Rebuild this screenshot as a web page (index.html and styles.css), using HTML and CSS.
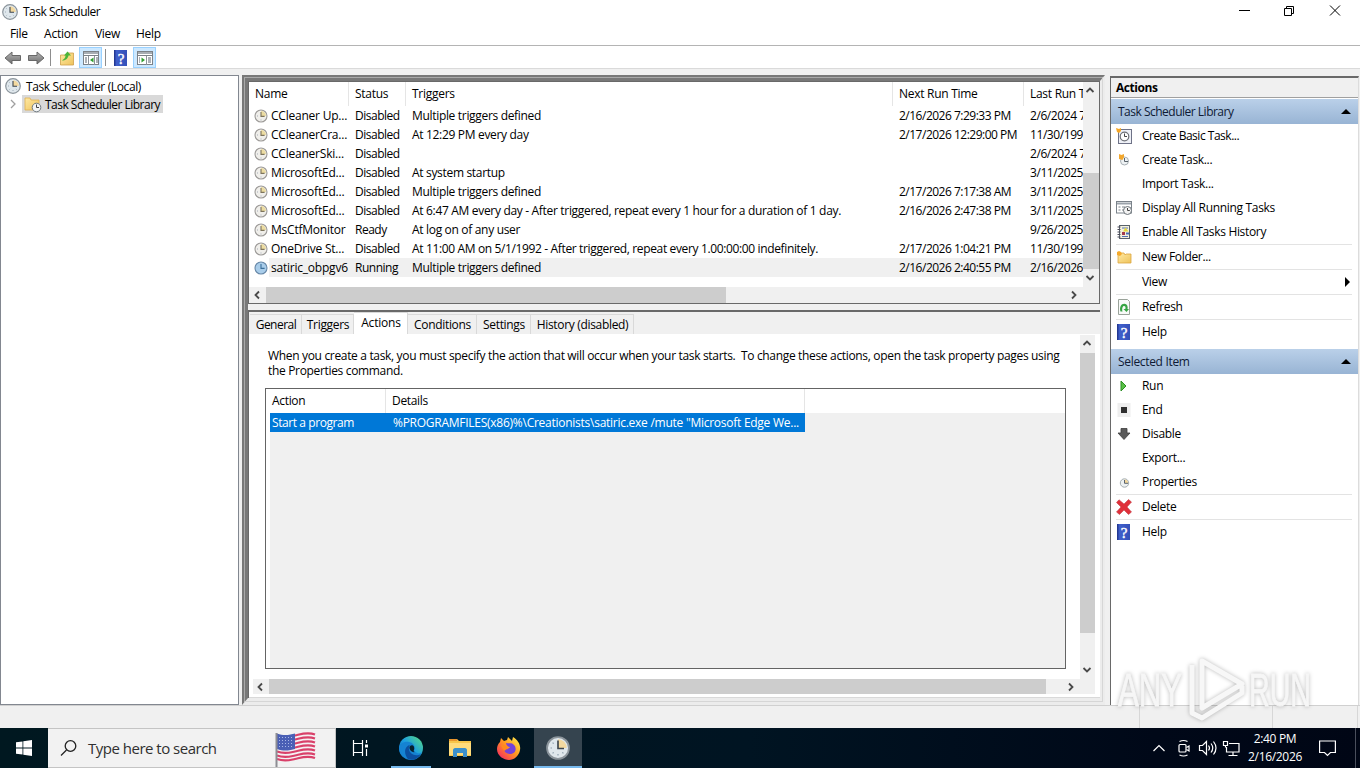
FILE: index.html
```html
<!DOCTYPE html>
<html lang="en">
<head>
    <meta charset="UTF-8">
    <meta name="viewport" content="width=device-width, initial-scale=1.0">
    <title>Task Scheduler</title>
    <link rel="stylesheet" href="styles.css">
</head>
<body>
    <!-- Shared icons -->
    <svg class="sprite" width="0" height="0">
        <defs>
            <linearGradient id="folderFill" x1="0" y1="0" x2="1" y2="1">
                <stop offset="0" stop-color="#ffe9a3"/><stop offset="1" stop-color="#eec35c"/>
            </linearGradient>
            <linearGradient id="arrowFill" x1="0" y1="0" x2="0" y2="1">
                <stop offset="0" stop-color="#b5b5b5"/><stop offset="1" stop-color="#6d6d6d"/>
            </linearGradient>
            <linearGradient id="helpFill" x1="0" y1="0" x2="1" y2="0">
                <stop offset="0" stop-color="#1d2f86"/><stop offset=".2" stop-color="#3f5fcb"/><stop offset="1" stop-color="#3450b8"/>
            </linearGradient>
            <linearGradient id="edgeFill" x1="0" y1="1" x2="1" y2="0">
                <stop offset="0" stop-color="#0c59a4"/><stop offset=".5" stop-color="#1b9de2"/><stop offset="1" stop-color="#5be07c"/>
            </linearGradient>
            <linearGradient id="foxFill" x1="1" y1="0" x2="0" y2="1">
                <stop offset="0" stop-color="#fff44f"/><stop offset=".45" stop-color="#ff9a1f"/><stop offset="1" stop-color="#f5156c"/>
            </linearGradient>
        </defs>
        <symbol id="clock" viewBox="0 0 16 16">
            <circle cx="8" cy="8" r="7.3" fill="#dfe7ec" stroke="#8b949b" stroke-width="1.2"/>
            <path d="M8 8V2.2A5.8 5.8 0 0 1 13.8 8z" fill="#f3d9a0"/>
            <path d="M8 3v5.300h4" fill="none" stroke="#3d464d" stroke-width="1.1"/>
            <path d="M3 8h1M8 12v1M4.400 4.400l.7.7M4.400 11.600l.7-.7M11.600 11.600l-.7-.7" stroke="#8fa0ad" stroke-width=".8"/>
        </symbol>
        <symbol id="clock-task" viewBox="0 0 14 14">
            <circle cx="7" cy="7" r="6" fill="#f0efeb" stroke="#9c9a98" stroke-width="1.1"/>
            <path d="M7 7V2a5 5 0 0 1 5 5z" fill="#ecdca2"/>
            <path d="M7 3v4.400h3.600" fill="none" stroke="#7d745c" stroke-width="1.1"/>
            <path d="M3 7h1M7 10.500v1" stroke="#a5abb8"/>
        </symbol>
        <symbol id="clock-run" viewBox="0 0 14 14">
            <circle cx="7" cy="7" r="6" fill="#a9cdea" stroke="#6788a8" stroke-width="1.1"/>
            <path d="M7 3v4.400h3.600" fill="none" stroke="#3b6f9a" stroke-width="1.1"/>
        </symbol>
        <symbol id="help" viewBox="0 0 13 16">
            <rect width="13" height="16" fill="url(#helpFill)"/>
            <text x="7" y="13.500" text-anchor="middle" class="help-mark">?</text>
        </symbol>
        <symbol id="window" viewBox="0 0 16 14">
            <rect x=".5" y=".5" width="15" height="13" fill="#fff" stroke="#7b8187"/>
            <path d="M1 2h14" stroke="#a7adb3" stroke-width="2"/>
            <path d="M1 4.500h14" stroke="#7b8187"/>
        </symbol>
        <symbol id="chev-left" viewBox="0 0 16 16"><path d="M10 4.500L6.500 8l3.500 3.500" class="chev"/></symbol>
        <symbol id="chev-right" viewBox="0 0 16 16"><path d="M6 4.500L9.500 8 6 11.500" class="chev"/></symbol>
        <symbol id="chev-up" viewBox="0 0 16 16"><path d="M4.500 10L8 6.500l3.500 3.500" class="chev"/></symbol>
        <symbol id="chev-down" viewBox="0 0 16 16"><path d="M4.500 6L8 9.500 11.500 6" class="chev"/></symbol>
    </svg>

    <div class="window">
        <header class="titlebar">
            <svg class="app-icon"><use href="#clock"/></svg>
            <span class="title">Task Scheduler</span>
            <svg class="caption-buttons" width="110" height="20" viewBox="0 0 110 20">
                <g fill="none" stroke="#000">
                    <path d="M4 10.500h11M49.500 8.500h7v7h-7zM51.500 8V6.500h7v7H57M95 5.500l10 10M105 5.500l-10 10"/>
                </g>
            </svg>
        </header>
        <nav class="menubar">
            <span class="m-file">File</span>
            <span class="m-action">Action</span>
            <span class="m-view">View</span>
            <span>Help</span>
        </nav>
        <div class="toolbar">
            <svg width="18" height="16" viewBox="0 0 18 16"><path d="M1 8l7-6v3.500h8.500v5H8V14z" fill="url(#arrowFill)" stroke="#686868"/></svg>
            <svg class="t-forward" width="18" height="16" viewBox="0 0 18 16"><path d="M17 8l-7-6v3.500H1.500v5H10V14z" fill="url(#arrowFill)" stroke="#686868"/></svg>
            <i class="tool-sep"></i>
            <svg class="t-up" width="16" height="16" viewBox="0 0 16 16">
                <path d="M1.500 5h6l1-2h6v12h-13z" fill="url(#folderFill)" stroke="#cfa04a" stroke-width=".8"/>
                <path d="M3 10.500c2.500-1.500 3.500-3 3.500-5H5L8.500 1.500 12 5.500H9.500c-.5 3-3 5-6.500 5z" fill="#4bb53a"/>
            </svg>
            <span class="tool-on">
                <svg width="16" height="14" viewBox="0 0 16 14"><use href="#window"/><path d="M5.500 5v9M11.500 5v9" stroke="#8d9399"/><path d="M2 7h2M2 9h2M2 11h2M13 7h2M13 9h2M13 11h2" stroke="#5a6570"/><path d="M10.500 6.500v5L7 9z" fill="#2f9e2f"/></svg>
            </span>
            <i class="tool-sep near"></i>
            <svg class="t-help" width="13" height="16"><use href="#help"/></svg>
            <span class="tool-on">
                <svg width="16" height="14" viewBox="0 0 16 14"><use href="#window"/><path d="M9.500 5v9" stroke="#8d9399"/><path d="M2 7h1M2 9h1M2 11h1M11 7h3M11 9h3M11 11h3" stroke="#5a6570"/><path d="M4.500 6.500v5L8 9z" fill="#2f9e2f"/></svg>
            </span>
        </div>

        <main class="content">
            <aside class="tree">
                <div class="tree-row">
                    <svg width="16" height="16"><use href="#clock"/></svg>
                    <span class="root">Task Scheduler (Local)</span>
                </div>
                <div class="tree-row child">
                    <svg class="expander" width="8" height="10" viewBox="0 0 8 10"><path d="M2 1l4 4-4 4" fill="none" stroke="#a0a0a0" stroke-width="1.300"/></svg>
                    <span class="tree-selected">
                        <svg width="18" height="17" viewBox="0 0 18 17">
                            <path d="M1 2h5l1 2h8v10H1z" fill="url(#folderFill)" stroke="#dfb050" stroke-width=".8"/>
                            <circle cx="12.500" cy="11.500" r="4.300" fill="#f3f5f6" stroke="#707a80"/>
                            <path d="M12.500 8.500v3H15" fill="none" stroke="#444"/>
                        </svg>
                        <span>Task Scheduler Library</span>
                    </span>
                </div>
            </aside>

            <section class="center">
                <div class="tasks">
                    <div class="tasks-view">
                        <div class="task-grid task-head">
                            <span>Name</span><span>Status</span><span>Triggers</span><span>Next Run Time</span><span>Last Run Time</span>
                        </div>
                        <div class="task-grid">
                            <span><svg><use href="#clock-task"/></svg>CCleaner Up...</span><span>Disabled</span><span>Multiple triggers defined</span><span>2/16/2026 7:29:33 PM</span><span>2/6/2024 7:</span>
                        </div>
                        <div class="task-grid">
                            <span><svg><use href="#clock-task"/></svg>CCleanerCra...</span><span>Disabled</span><span>At 12:29 PM every day</span><span>2/17/2026 12:29:00 PM</span><span>11/30/199</span>
                        </div>
                        <div class="task-grid">
                            <span><svg><use href="#clock-task"/></svg>CCleanerSki...</span><span>Disabled</span><span></span><span></span><span>2/6/2024 7:</span>
                        </div>
                        <div class="task-grid">
                            <span><svg><use href="#clock-task"/></svg>MicrosoftEd...</span><span>Disabled</span><span>At system startup</span><span></span><span>3/11/2025</span>
                        </div>
                        <div class="task-grid">
                            <span><svg><use href="#clock-task"/></svg>MicrosoftEd...</span><span>Disabled</span><span>Multiple triggers defined</span><span>2/17/2026 7:17:38 AM</span><span>3/11/2025</span>
                        </div>
                        <div class="task-grid">
                            <span><svg><use href="#clock-task"/></svg>MicrosoftEd...</span><span>Disabled</span><span class="long">At 6:47 AM every day - After triggered, repeat every 1 hour for a duration of 1 day.</span><span>2/16/2026 2:47:38 PM</span><span>3/11/2025</span>
                        </div>
                        <div class="task-grid">
                            <span><svg><use href="#clock-task"/></svg>MsCtfMonitor</span><span>Ready</span><span>At log on of any user</span><span></span><span>9/26/2025</span>
                        </div>
                        <div class="task-grid">
                            <span><svg><use href="#clock-task"/></svg>OneDrive St...</span><span>Disabled</span><span class="longer">At 11:00 AM on 5/1/1992 - After triggered, repeat every 1.00:00:00 indefinitely.</span><span>2/17/2026 1:04:21 PM</span><span>11/30/199</span>
                        </div>
                        <div class="task-grid selected">
                            <span><svg><use href="#clock-run"/></svg>satiric_obpgv6</span><span>Running</span><span>Multiple triggers defined</span><span>2/16/2026 2:40:55 PM</span><span>2/16/2026</span>
                        </div>
                    </div>
                    <div class="vscroll">
                        <svg><use href="#chev-up"/></svg>
                        <i class="thumb"></i>
                        <svg><use href="#chev-down"/></svg>
                    </div>
                    <div class="hscroll">
                        <svg><use href="#chev-left"/></svg>
                        <i class="thumb"></i>
                        <svg><use href="#chev-right"/></svg>
                    </div>
                </div>

                <div class="details">
                    <div class="tabs">
                        <span class="tab general">General</span>
                        <span class="tab triggers">Triggers</span>
                        <span class="tab active">Actions</span>
                        <span class="tab conditions">Conditions</span>
                        <span class="tab settings">Settings</span>
                        <span class="tab history">History (disabled)</span>
                    </div>
                    <div class="tab-page">
                        <div class="page-body">
                            <p class="hint"><span>When you create a task, you must specify the action that will occur when your task starts.&nbsp; To change these actions, open the task property pages using</span><br>the Properties command.</p>
                            <div class="action-list">
                                <div class="action-head"><span>Action</span><span>Details</span></div>
                                <div class="action-body">
                                    <div class="action-row"><span>Start a program</span><span class="path">%PROGRAMFILES(x86)%\Creationists\satiric.exe /mute "Microsoft Edge We...</span></div>
                                </div>
                            </div>
                        </div>
                        <div class="vscroll">
                            <svg><use href="#chev-up"/></svg>
                            <i class="thumb"></i>
                            <svg><use href="#chev-down"/></svg>
                        </div>
                        <div class="hscroll">
                            <svg><use href="#chev-left"/></svg>
                            <i class="thumb"></i>
                            <svg><use href="#chev-right"/></svg>
                        </div>
                    </div>
                </div>
            </section>

            <aside class="actions">
                <h2>Actions</h2>
                <div class="group-head"><span class="library">Task Scheduler Library</span><i class="up"></i></div>
                <ul>
                    <li><svg viewBox="0 0 16 16"><rect x="2.500" y="1.500" width="13" height="14" fill="#eef0f6" stroke="#6e7287"/><circle cx="8.500" cy="8.500" r="4.300" fill="#fff" stroke="#6c7076" stroke-width="1.200"/><path d="M8.500 5.500v3H11" fill="none" stroke="#444"/><path d="M0 0l3 1 2-1v3l-2 2-2-1z" fill="#f5a623"/></svg><span class="basic">Create Basic Task...</span></li>
                    <li><svg viewBox="0 0 16 16"><circle cx="8.500" cy="9" r="4" fill="#eef2f4" stroke="#a8b0b5"/><path d="M8.500 6v3.500H12" fill="none" stroke="#59636b"/><path d="M3 2l2.500 1L8 2v3L6.500 8 3 7z" fill="#f2a72e"/></svg><span>Create Task...</span></li>
                    <li><svg></svg><span>Import Task...</span></li>
                    <li><svg viewBox="0 0 16 16"><rect x=".5" y="1.500" width="15" height="11.500" fill="#fff" stroke="#7a828a"/><path d="M1 3.500h14" stroke="#9ba3ab" stroke-width="2"/><path d="M2.500 7h2M2.500 10h2M6 7h3M6 10h2" stroke="#7a828a"/><circle cx="11.500" cy="10.500" r="4" fill="#f3f3f3" stroke="#6c747a"/><path d="M11.500 8v2.500h2.300" fill="none" stroke="#444"/></svg><span class="running">Display All Running Tasks</span></li>
                    <li><svg viewBox="0 0 16 16"><rect x="3.500" y="1.500" width="10" height="13" fill="#f4f1dc" stroke="#59626b"/><path d="M1.500 3h3M1.500 5.500h3M1.500 8h3M1.500 10.500h3M1.500 13h3" stroke="#4b4b58"/><path d="M6 4h6M6 12.500h6" stroke="#5470b5"/><path d="M9.500 3.500l3 4H7z" fill="#e6d93c"/><rect x="6" y="8" width="3" height="3" fill="#a33a4b"/><path d="M10 9.500h3" stroke="#4c6cb7" stroke-width="2"/></svg><span>Enable All Tasks History</span></li>
                    <li class="ruled"><svg viewBox="0 0 16 16"><path d="M2 4h6l1 2 1-1h5v9H2z" fill="url(#folderFill)" stroke="#dca640" stroke-width=".8"/><path d="M1 3l2-1 2 1 1 2-2 2-3-1z" fill="#f5aa2c"/></svg><span>New Folder...</span></li>
                    <li class="ruled"><svg></svg><span>View</span><i class="submenu"></i></li>
                    <li class="ruled"><svg viewBox="0 0 16 16"><path d="M2.500.5h9l2 2v13h-11z" fill="#f8faf8" stroke="#9aa39a"/><path d="M6.500 12.500H4.500C3 8 5.500 4.500 8.500 4.800c2.600.3 3.700 2.700 3 5.200H13l-2.500 3L7.500 10h1.800c.6-1.700 0-3-1.200-3-1.600 0-2.300 2.500-1.600 5.500z" fill="#36a543"/></svg><span>Refresh</span></li>
                    <li class="ruled"><svg class="help-icon"><use href="#help"/></svg><span>Help</span></li>
                </ul>
                <div class="group-head second"><span>Selected Item</span><i class="up"></i></div>
                <ul>
                    <li><svg viewBox="0 0 16 16"><path d="M5 3l5 5-5 5z" fill="#59c046" stroke="#2a8e22"/></svg><span>Run</span></li>
                    <li><svg viewBox="0 0 16 16"><rect x="1.500" y="1" width="13" height="14" fill="#eee"/><rect x="5" y="5" width="6" height="6" fill="#2e2e2e"/></svg><span>End</span></li>
                    <li><svg viewBox="0 0 16 16"><path d="M5 2.500h6V7h3l-6 6.500L2 7h3z" fill="#5a5a5a" stroke="#3c3c3c" stroke-width=".8"/></svg><span>Disable</span></li>
                    <li><svg></svg><span>Export...</span></li>
                    <li><svg viewBox="0 0 16 16"><circle cx="8.500" cy="9" r="4.200" fill="#edf1f2" stroke="#a3acb0"/><path d="M8.500 9V5.500A3.500 3.500 0 0 1 12 9z" fill="#f2d69b"/><path d="M8.500 6v3.300H12" fill="none" stroke="#59636b"/></svg><span>Properties</span></li>
                    <li class="ruled"><svg viewBox="0 0 16 16"><path d="M3 .8L8 5l4.500-4.500L15.500 3 11 8l4.500 5-3 2.500L8 11l-4.500 4.500-3-2.500L5 8 .5 3.500z" fill="#e0303a" stroke="#c64148" stroke-width=".6"/></svg><span>Delete</span></li>
                    <li class="ruled"><svg class="help-icon"><use href="#help"/></svg><span>Help</span></li>
                </ul>
            </aside>
        </main>

        <footer class="statusbar"><i></i><i></i><i></i></footer>
    </div>

    <svg class="watermark" width="200" height="70" viewBox="0 0 200 70">
        <g class="mark-text">
            <text x="2" y="51" textLength="64" lengthAdjust="spacingAndGlyphs">ANY</text>
            <text x="133" y="51" textLength="62" lengthAdjust="spacingAndGlyphs">RUN</text>
        </g>
        <path class="mark-line" d="M86 6l40 23-40 24zM76 10v48l10 5 40-25v-7"/>
    </svg>

    <div class="taskbar">
        <div class="start">
            <svg width="16" height="16" viewBox="0 0 16 16"><path d="M0 2.300l6.500-.9v6.200H0zM7.300 1.200L16 0v7.600H7.300zM0 8.400h6.500v6.200L0 13.700zM7.300 8.400H16V16l-8.700-1.200z" fill="#fff"/></svg>
        </div>
        <div class="search">
            <svg width="18" height="18" viewBox="0 0 18 18"><circle cx="10.500" cy="7" r="5.300" fill="none" stroke="#222" stroke-width="1.300"/><path d="M6.500 11L1 16.500" stroke="#222" stroke-width="1.300"/></svg>
            <span>Type here to search</span>
            <svg class="flag" width="42" height="38" viewBox="0 0 42 38">
                <path d="M2 5c8 3 13 1 18 0s12-4 20-1v26c-8-3-15 0-20 1s-10 3-18 0z" fill="#f5f1f3"/>
                <g fill="none" stroke="#d9416a" stroke-width="2.200">
                    <path d="M2 6.500c8 3 13 1 18 0s12-4 20-1"/><path d="M2 10.500c8 3 13 1 18 0s12-4 20-1"/><path d="M2 14.500c8 3 13 1 18 0s12-4 20-1"/><path d="M2 18.500c8 3 13 1 18 0s12-4 20-1"/><path d="M2 22.500c8 3 13 1 18 0s12-4 20-1"/><path d="M2 26.500c8 3 13 1 18 0s12-4 20-1"/><path d="M2 30c8 3 13 1 18 0s12-4 20-1"/>
                </g>
                <path d="M2 4.500c8 3 13 1 18 0V20c-5 1-10 3-18 0z" fill="#4a5fb5"/>
                <path d="M4 8.500h15M4 11.500h15M4 14.500h15M4 17.500h15" stroke="#a9b7e6" stroke-dasharray="1 2"/>
                <path d="M1.500 4v34" stroke="#8d8d93" stroke-width="2"/>
            </svg>
        </div>
        <div class="task-button view">
            <svg width="18" height="16" viewBox="0 0 18 16"><path d="M1.500 0v3.500h9V0M1.500 16v-3.500h9V16M1.500 3.500v9M10.500 3.500v9M14.500 0v3M14.500 9v7" fill="none" stroke="#fff" stroke-width="1.200"/><rect x="13" y="4.500" width="3" height="3" fill="#fff"/></svg>
        </div>
        <div class="task-button open edge">
            <svg width="24" height="24" viewBox="0 0 24 24">
                <circle cx="12" cy="12" r="12" fill="url(#edgeFill)"/>
                <path d="M0 12C1 7 6 5 10 6c5 1 7 5 5 9 3 3 6 3 8 1-3 6-9 9-14 7C3 22 0 17 0 12z" fill="#1583d2"/>
                <path d="M9 23C4 17 6 10 11 9c-1 1-2 4 0 7 3 4 8 4 11 2-3 5-8 7-13 5z" fill="#0b4fa0"/>
                <path d="M11 10c3-2 5 1 4 4-1 1 0 2 1 2-3 1-7-3-5-6z" fill="#06202c"/>
            </svg>
        </div>
        <div class="task-button">
            <svg width="22" height="20" viewBox="0 0 22 20"><path d="M0 1h8l2 2h12v15H0z" fill="#f7c64b"/><path d="M0 5h22v12H0z" fill="#ffdc7c"/><path d="M0 1h8v2H0z" fill="#e9952d"/><path d="M4 19v-7c0-1 1-2 2-2h10c1 0 2 1 2 2v7h-4v-4H8v4z" fill="#3b90cc"/></svg>
        </div>
        <div class="task-button">
            <svg width="24" height="24" viewBox="0 0 24 24">
                <path d="M3 6l1-4 3 3 3-1 1-3 4 4 1-4c5 3 8 8 7 13-1 6-6 10-11 10S0 20 0 13c0-3 1-5 3-7z" fill="url(#foxFill)"/>
                <path d="M9 7c4 1 5-1 8 2s2 9-4 9c-5 0-7-4-5-6 2 1 4 1 5-1-2 0-4-2-4-4z" fill="#7442d8"/>
                <path d="M4 9l6 1 1 3c-2 0-3 1-3 2-2-1-3-3-4-6z" fill="#ff8a1c"/>
            </svg>
        </div>
        <div class="task-button open current">
            <svg width="24" height="24"><use href="#clock"/></svg>
        </div>
        <div class="tray">
            <svg class="tray-icons" width="92" height="20" viewBox="0 0 92 20">
                <g fill="none" stroke="#fff" stroke-width="1.200">
                    <path d="M1.500 13L7 7.500l5.500 5.500"/>
                    <rect x="27" y="6.500" width="7" height="7.500" rx="1"/><path d="M34.500 9.500l2.500-1.500v5l-2.500-1.500M27.500 3.500q4-2 8 0M27.500 17q4 2 8 0"/>
                    <path d="M47.500 7.500h3l4-4v13l-4-4h-3zM56.500 7.500q2 2.500 0 5M59 5.500q3.500 4.500 0 9M61.500 3.500q5 6.500 0 13"/>
                    <path d="M77 5.500h10v8.500H74.500V9M81 14v3.500M76.500 17.500h9M71.500 3.500h4v4h-4zM73.500 7.500v2"/>
                </g>
            </svg>
            <div class="time"><span>2:40 PM</span><span>2/16/2026</span></div>
            <svg class="notify" width="17" height="17" viewBox="0 0 17 17"><path d="M.6 1h15.800v11.500h-5L8.500 15.500l-3-3H.6z" fill="none" stroke="#fff" stroke-width="1.200"/></svg>
        </div>
    </div>
</body>
</html>
```
FILE: styles.css
```css
* {
    margin: 0;
    padding: 0;
    box-sizing: border-box;
}

body {
    width: 1360px;
    height: 768px;
    overflow: hidden;
    font-family: "Open Sans", "Noto Sans", sans-serif;
    font-size: 12px;
    letter-spacing: -0.32px;
    color: #000;
    background: #f0f0f0;
    white-space: nowrap;
}

svg {
    display: block;
    flex: none;
}

.sprite {
    position: absolute;
}

.help-mark {
    font: 15px "Liberation Serif", serif;
    fill: #fff;
    stroke: #fff;
    stroke-width: 0.4;
}

.chev {
    fill: none;
    stroke: #4a4a4a;
    stroke-width: 1.8;
}

.window {
    height: 728px;
    display: flex;
    flex-direction: column;
}

/* Title, menu and toolbar */
.titlebar {
    height: 23px;
    display: flex;
    align-items: center;
    padding-left: 2px;
    background: #fff;
}

.app-icon {
    width: 16px;
    height: 16px;
}

.title {
    margin-left: 5px;
    letter-spacing: -0.5px;
}

.caption-buttons {
    margin-left: auto;
    margin-right: 15px;
    margin-bottom: 3px;
}

.menubar {
    height: 23px;
    display: flex;
    align-items: center;
    padding: 0 0 2px 10px;
    background: #fff;
    border-bottom: 1px solid #b4b4b4;
}

.m-file { width: 34px; }
.m-action { width: 51px; letter-spacing: -0.2px; }
.m-view { width: 41px; }

.toolbar {
    height: 23px;
    display: flex;
    align-items: center;
    padding: 1px 0 0 4px;
    background: #fff;
    border-bottom: 1px solid #dadada;
}

.t-forward { margin-left: 5px; }
.t-up { margin-left: 8px; }
.t-help { margin: 0 13px 0 8px; }

.tool-sep {
    width: 1px;
    height: 17px;
    margin-left: 5px;
    background: #8d8d8d;
}

.tool-sep.near { margin-left: 3px; }

.tool-on {
    width: 23px;
    height: 21px;
    display: flex;
    align-items: center;
    justify-content: center;
    background: #cce8ff;
    border: 1px solid #99d1ff;
}

.t-up + .tool-on { margin-left: 4px; }
.t-help + .tool-on { margin-left: -7px; }

/* Three panes */
.content {
    height: 636px;
    padding-top: 6px;
    display: flex;
}

.tree {
    width: 239px;
    padding-top: 1px;
    background: #fff;
    border: 1px solid #828790;
}

.tree-row {
    height: 18px;
    display: flex;
    align-items: center;
    padding-left: 4px;
}

.root {
    margin-left: 5px;
    letter-spacing: -0.38px;
}

.child { padding-left: 8px; }

.tree-selected {
    height: 18px;
    display: flex;
    align-items: center;
    margin-left: 5px;
    padding: 0 3px 0 2px;
    gap: 3px;
    letter-spacing: -0.52px;
    background: #d9d9d9;
}

.center {
    width: 863px;
    margin-left: 3px;
    display: flex;
    flex-direction: column;
    border-style: solid;
    border-width: 6px 5px 7px 6px;
    border-color: #787878 #ececec #ececec #787878;
    background: #f0f0f0;
    position: relative;
}

.center::before {
    content: "";
    position: absolute;
    inset: -4px -3px -4px -4px;
    border: 1px solid #a9a9a9;
    border-right-color: #d6d6d6;
    border-bottom-color: #d6d6d6;
}

.tasks {
    height: 223px;
    display: grid;
    grid-template-columns: 834px 16px;
    grid-template-rows: 205px 16px;
    border: 1px solid #696969;
    background: #f0f0f0;
}

.tasks-view {
    overflow: hidden;
    background: #fff;
}

.task-grid {
    height: 19px;
    width: 960px;
    display: grid;
    grid-template-columns: 100px 57px 487px 131px 185px;
    align-items: center;
}

.task-grid span {
    height: 19px;
    line-height: 18px;
    display: flex;
    align-items: center;
    padding-left: 6px;
}

.task-grid span:first-child { letter-spacing: -0.22px; }
.task-grid span:nth-child(2) { letter-spacing: -0.48px; }
.task-grid span:nth-child(4) { letter-spacing: -0.5px; }
.task-grid span:nth-child(5) { letter-spacing: -0.42px; }
.task-grid .longer { letter-spacing: -0.36px; }

.task-grid svg {
    width: 14px;
    height: 14px;
    margin: 0 3px 0 -1px;
}

.task-head {
    height: 24px;
}

.task-head span {
    height: 24px;
    border-right: 1px solid #e5e5e5;
}

.task-grid.task-head span:nth-child(n) { letter-spacing: -0.28px; }

.selected {
    background: linear-gradient(90deg, #fff 20px, #f0f0f0 20px);
}

.vscroll {
    display: flex;
    flex-direction: column;
    background: #f0f0f0;
}

.hscroll {
    display: flex;
    background: #f0f0f0;
}

.vscroll svg,
.hscroll svg {
    width: 16px;
    height: 16px;
}

.tasks .vscroll svg { margin-left: -1px; }

.thumb {
    background: #cdcdcd;
}

.tasks .vscroll .thumb {
    height: 96px;
    margin: 75px 0 1px;
}

.tasks .hscroll .thumb {
    width: 460px;
    margin: 0 340px 0 1px;
}

.details {
    height: 388px;
    margin-top: 6px;
    border: solid #696969;
    border-width: 2px 0 0 1px;
    display: flex;
    flex-direction: column;
}

.tabs {
    height: 22px;
    display: flex;
    align-items: flex-end;
    padding-left: 1px;
}

.tab {
    height: 20px;
    display: flex;
    align-items: center;
    justify-content: center;
    padding-left: 1px;
    border: 1px solid #d9d9d9;
    border-left-width: 0;
    border-bottom: 0;
}

.general { width: 52px; letter-spacing: -0.5px; }
.triggers { width: 52px; }
.conditions { width: 69px; }
.settings { width: 54px; }
.history { width: 103px; }

.tab.active {
    width: 54px;
    height: 22px;
    background: #fff;
    padding-bottom: 2px;
    letter-spacing: -0.2px;
}

.tab-page {
    height: 364px;
    padding: 1px 3px 3px 4px;
    display: grid;
    grid-template-columns: 827px 15px;
    grid-template-rows: 344px 15px;
    background: #fff;
    border-bottom: 1px solid #d9d9d9;
}

.page-body {
    padding: 14px 14px 10px 12px;
}

.hint {
    height: 39px;
    margin-top: -1px;
    margin-bottom: 1px;
    padding-left: 3px;
    line-height: 15px;
    letter-spacing: -0.33px;
}

.action-list {
    height: 281px;
    display: flex;
    flex-direction: column;
    border: 1px solid #646464;
    background: #fff;
}

.action-head {
    height: 24px;
    display: flex;
}

.action-head span {
    width: 120px;
    display: flex;
    align-items: center;
    padding: 0 0 2px 6px;
    border-right: 1px solid #e5e5e5;
}

.action-head span + span { width: 419px; }

.action-body {
    flex: 1;
    margin-left: 4px;
    background: #f0f0f0;
}

.action-row {
    width: 535px;
    height: 19px;
    display: flex;
    align-items: center;
    padding-left: 2px;
    color: #fff;
    background: #0078d7;
}

.action-row span:first-child {
    width: 121px;
    letter-spacing: -0.42px;
}

.path { letter-spacing: -0.26px; }

.tab-page .vscroll svg { margin-left: -1px; }

.tab-page .vscroll .thumb {
    height: 280px;
    margin: 2px 0 29px;
}

.tab-page .hscroll {
    grid-column: 1 / 3;
}

.tab-page .hscroll svg:first-child { margin-left: -1px; }

.tab-page .hscroll .thumb {
    width: 777px;
    margin: 0 17px 0 1px;
}

/* Actions pane */
.actions {
    width: 249px;
    margin-left: 5px;
    margin-top: 1px;
    border: solid #696969;
    border-width: 2px 1px 0 1px;
    border-right-color: #dcdcdc;
    background: #fff;
}

.actions h2 {
    height: 20px;
    padding-left: 5px;
    font-size: 12px;
    line-height: 20px;
    letter-spacing: -0.45px;
    background: #f0f0f0;
    border-bottom: 1px solid #a0a0a0;
}

.group-head {
    height: 25px;
    margin-top: 1px;
    display: flex;
    align-items: center;
    padding: 0 7px 0 7px;
    color: #0e1a35;
    background: linear-gradient(#bad0e9, #98b4d4);
}

.library { letter-spacing: -0.5px; }

.group-head.second { margin-top: 5px; }

.up {
    margin-left: auto;
    border: 5px solid transparent;
    border-top: 0;
    border-bottom-color: #000;
}

.actions ul {
    list-style: none;
}

.actions li {
    height: 24px;
    display: flex;
    align-items: center;
    padding-left: 5px;
    padding-right: 8px;
}

.actions li span {
    padding-bottom: 2px;
}

.basic { letter-spacing: -0.48px; }

.actions li.ruled {
    height: 25px;
    padding-top: 1px;
    background: linear-gradient(#e3e3e3, #e3e3e3) 5px 0 / 236px 1px no-repeat;
}

.actions li svg {
    width: 16px;
    height: 16px;
    margin-right: 10px;
}

.actions li .help-icon {
    width: 13px;
    margin-left: 1px;
    margin-right: 12px;
}

.submenu {
    margin-left: auto;
    border: 5px solid transparent;
    border-right: 0;
    border-left-color: #000;
}

.statusbar {
    height: 23px;
    display: flex;
    border-top: 1px solid #d0d0d0;
    background: #f0f0f0;
}

.statusbar i {
    width: 133px;
    border-right: 1px solid #d7d7d7;
}

.statusbar i:first-child { width: 1140px; }
.statusbar i:last-child { width: 85px; }

.watermark {
    position: absolute;
    left: 1116px;
    top: 655px;
    filter: drop-shadow(0 0 2px rgba(0, 0, 0, 0.28));
}

.mark-text {
    font: 46px "Liberation Sans", sans-serif;
    fill: #f6f6f6;
    stroke: #f6f6f6;
    stroke-width: 0.8;
    letter-spacing: 0;
}

.mark-line {
    fill: none;
    stroke: #f7f7f7;
    stroke-width: 5;
    stroke-linejoin: round;
}

/* Taskbar */
.taskbar {
    height: 40px;
    display: flex;
    color: #fff;
    background: linear-gradient(90deg, #001820, #001422 55%, #000818 85%, #000615);
}

.start {
    width: 48px;
    display: flex;
    align-items: center;
    justify-content: center;
}

.search {
    width: 288px;
    display: flex;
    align-items: center;
    padding-left: 12px;
    color: #303030;
    font-size: 15px;
    letter-spacing: -0.5px;
    background: #f2f2f2;
    border: 1px solid #c4c4c4;
    border-left: 0;
}

.search span {
    width: 187px;
    margin-left: 10px;
}

.task-button {
    width: 49px;
    display: flex;
    align-items: center;
    justify-content: center;
}

.task-button.view {
    width: 48px;
    padding-left: 2px;
}

.task-button.edge {
    width: 48px;
    margin-left: 3px;
}

.open {
    background: linear-gradient(#76b9ed, #76b9ed) center bottom / 40px 2px no-repeat;
}

.task-button.current {
    width: 48px;
    margin-left: 1px;
    background-color: #35444f;
    background-size: 48px 2px;
}

.tray {
    width: 210px;
    margin-left: auto;
    margin-right: 4px;
    display: flex;
    align-items: center;
    border-right: 1px solid #4a4f5c;
}

.tray-icons { margin-left: 6px; }

.time {
    width: 62px;
    display: flex;
    flex-direction: column;
    align-items: center;
    line-height: 18px;
}

.notify { margin-left: 13px; }
```
